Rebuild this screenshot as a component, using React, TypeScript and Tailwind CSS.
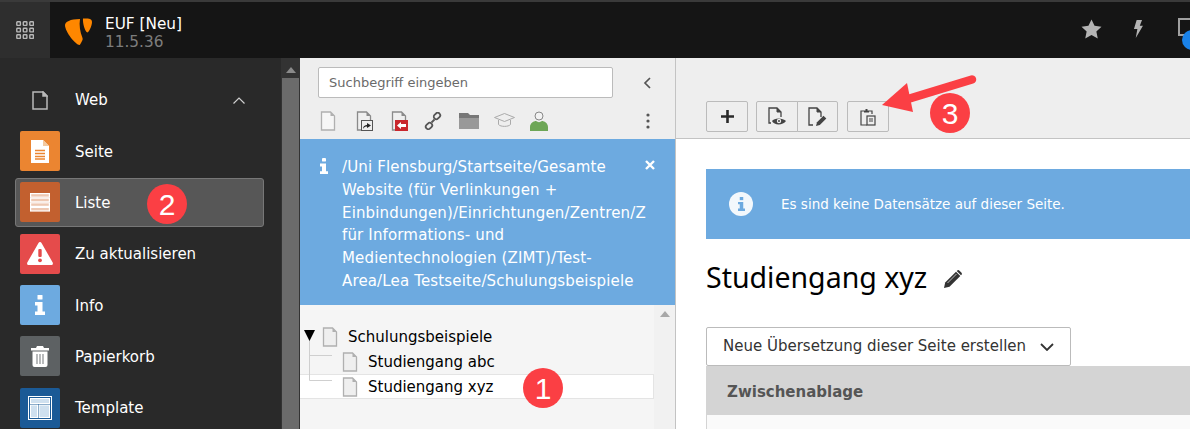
import React from "react";

const Doc = ({ size = 18, stroke = "#b0b0b0", fill = "#efefef", className = "" }: { size?: number; stroke?: string; fill?: string; className?: string }) => (
  <svg width={size} height={size} viewBox="0 0 16 20" className={className}>
    <path d="M1.500 1h9l4 4v14h-13z" fill={fill} stroke={stroke} strokeWidth="1.300" />
    <path d="M10.500 1v4h4z" fill={stroke} />
  </svg>
);

const Badge = ({ n, className }: { n: string; className: string }) => (
  <div className={"absolute w-[40px] h-[40px] rounded-full bg-[#fb3f44] text-white flex items-center justify-center text-[30px] font-['Liberation_Sans',sans-serif] " + className}>
    {n}
  </div>
);

const ModuleRow = ({ color, label, active, children }: { color: string; label: string; active?: boolean; children: React.ReactNode }) => (
  <div className={"flex items-center ml-[15px] rounded-[3px] " + (active ? "bg-[#575757] border border-[#777] my-px h-[49.300px] pl-[4px] mr-[16px]" : "h-[51.300px] pl-[5px] mr-[16px]")}>
    <div className="w-[40px] h-[40px] rounded-[2px] flex items-center justify-center shrink-0" style={{ background: color }}>
      {children}
    </div>
    <span className="ml-[15px] pt-[2px] text-[15px] text-white">{label}</span>
  </div>
);

const ToolBtn = ({ children, className = "" }: { children: React.ReactNode; className?: string }) => (
  <div className={"h-[31px] flex items-center justify-center bg-[#eeeeee] border border-[#bbbbbb] " + className}>{children}</div>
);

export default function App() {
  return (
    <div className="relative w-[1190px] h-[429px] overflow-hidden bg-white flex flex-col font-['DejaVu_Sans',Verdana,sans-serif]">
      {/* top bar */}
      <header className="h-[58px] shrink-0 flex bg-[#151515] border-t-2 border-[#3a3a3a]">
        <div className="w-[50px] bg-[#2e2e2e] flex items-center justify-center">
          <svg width="18" height="18" viewBox="0 0 18 18" fill="none" stroke="#b8b8b8" strokeWidth="1.400">
            {[0, 6.5, 13].map((y) =>
              [0, 6.5, 13].map((x) => <rect key={`${x}-${y}`} x={x + 0.8} y={y + 0.8} width="3.600" height="3.600" rx="0.600" />)
            )}
          </svg>
        </div>
        <svg width="28" height="28" viewBox="0 0 28 28" className="ml-[15px] mt-[16px]">
          <path d="M0 7C0 4 5 1 15 1c-1 6 0 13 2.500 19 .3 1 .2 2-.5 3-1 2-2 4-2.500 4C11 27 0 14 0 7z" fill="#ff8700" />
          <path d="M18 .5C22 .5 27 0 27 4c0 4-3 10-4.500 10.500C20 14 17.500 5 18 .5z" fill="#ff8700" />
        </svg>
        <div className="ml-[12px] mt-[13px] leading-[18px] text-[15.300px]">
          <div className="text-white">EUF [Neu]</div>
          <div className="text-[#7d7d7d]">11.5.36</div>
        </div>
        <div className="ml-auto flex items-center">
          <svg width="21" height="20" viewBox="0 0 24 23" fill="#b4b4b4" className="mr-[31px] mb-[2px]">
            <path d="M12 .5l3.500 7.400 8 1-5.900 5.500 1.600 8L12 18.500l-7.200 3.900 1.600-8L.5 8.900l8-1z" />
          </svg>
          <svg width="10" height="18" viewBox="0 0 11 20" fill="#b4b4b4" className="mr-[35px] mb-[3px]">
            <path d="M4 0h6L7.500 6.500H11L3 20l1.800-10H1z" />
          </svg>
          <div className="relative w-[12px] h-[20px] mb-[4px]">
            <div className="absolute left-0 top-0 w-[20px] h-[18px] border-2 border-[#a0a0a0]" />
            <div className="absolute left-[4px] top-[12px] w-[20px] h-[20px] rounded-full bg-[#1a82e8]" />
          </div>
        </div>
      </header>

      <div className="flex flex-1 min-h-0">
        {/* modules sidebar */}
        <aside className="w-[280px] shrink-0 bg-[#292929]">
          <div className="h-[67.400px] pt-[17px] flex items-center text-white text-[15px]">
            <div className="w-[75px] flex justify-center pl-[5px]">
              <svg width="16" height="19" viewBox="0 0 16 19" fill="none" stroke="#b8b8b8" strokeWidth="1.500">
                <path d="M1 1h10l4 4v13H1z" />
                <path d="M11 1v4h4z" fill="#b8b8b8" />
              </svg>
            </div>
            <span>Web</span>
            <svg width="12" height="7" viewBox="0 0 12 7" fill="none" stroke="#d0d0d0" strokeWidth="1.200" className="ml-[125px]">
              <path d="M.5 6.500L6 1l5.500 5.500" />
            </svg>
          </div>
          <ModuleRow color="#eb8531" label="Seite">
            <svg width="18" height="23" viewBox="0 0 18 23">
              <path d="M0 0h12l6 6v17H0z" fill="#fff" />
              <path d="M12 0v6h6z" fill="#f3c99f" />
              <path d="M4 10.500h10M4 13.500h10M4 16.500h10M4 19h10" stroke="#eb8531" strokeWidth="1.600" />
            </svg>
          </ModuleRow>
          <ModuleRow color="#c2602f" label="Liste" active>
            <svg width="20" height="19" viewBox="0 0 20 19" fill="none" stroke="#fff" strokeWidth="1.200">
              {[0.6, 5.2, 9.8, 14.4].map((y) => (
                <rect key={y} x="0.600" y={y} width="18.800" height="3.600" fill="#eec8b2" />
              ))}
            </svg>
          </ModuleRow>
          <ModuleRow color="#e54b4b" label="Zu aktualisieren">
            <svg width="26" height="23" viewBox="0 0 26 23">
              <path d="M13 0c.7 0 1.200.4 1.500 1L25.700 20.500c.6 1.200-.1 2.500-1.400 2.500H1.700C.4 23-.3 21.700.3 20.500L11.500 1c.3-.6.8-1 1.500-1z" fill="#fff" />
              <rect x="11.300" y="7" width="3.400" height="8" rx="1" fill="#e54b4b" />
              <circle cx="13" cy="18.300" r="1.900" fill="#e54b4b" />
            </svg>
          </ModuleRow>
          <ModuleRow color="#6daae0" label="Info">
            <svg width="10" height="20" viewBox="0 0 10 20" fill="#fff">
              <rect x="2.500" y="0" width="5" height="4.500" rx="0.600" />
              <path d="M0 7h7.500v9.500H10V20H0v-3.500h2.500v-6H0z" />
            </svg>
          </ModuleRow>
          <ModuleRow color="#5d6163" label="Papierkorb">
            <svg width="18" height="21" viewBox="0 0 18 21" fill="#fff">
              <path d="M6 0h6l1 2h5v2.500H0V2h5z" />
              <path d="M1.500 5.500h15V19a2 2 0 0 1-2 2h-11a2 2 0 0 1-2-2z" />
              <path d="M6 8v10M9 8v10M12 8v10" stroke="#8a8e90" strokeWidth="1.200" />
            </svg>
          </ModuleRow>
          <ModuleRow color="#1b5a96" label="Template">
            <svg width="24" height="24" viewBox="0 0 24 24">
              <rect x="0.500" y="0.500" width="23" height="23" fill="none" stroke="#fff" />
              <rect x="2.500" y="2.500" width="19" height="5" fill="#cfe0ef" stroke="#fff" />
              <rect x="2.500" y="9" width="7" height="12.500" fill="#cfe0ef" stroke="#fff" />
              <rect x="11" y="9" width="10.500" height="12.500" fill="#cfe0ef" stroke="#fff" />
            </svg>
          </ModuleRow>
        </aside>

        {/* scrollbar */}
        <div className="w-[20px] shrink-0 bg-[#333333] flex flex-col items-center border-l border-[#2a2a2a]">
          <svg width="10" height="6" viewBox="0 0 10 6" className="mt-[9px] mb-[5px]"><path d="M5 0l5 6H0z" fill="#8a8a8a" /></svg>
          <div className="w-[17px] flex-1 bg-[#6b6b6b]" />
        </div>

        {/* page tree */}
        <section className="w-[376px] shrink-0 flex flex-col bg-[#f5f5f5] border-r border-[#c3c3c3]">
          <div className="h-[81px] shrink-0 bg-[#eeeeee] pl-[18px] pt-[9px] pr-[24px]">
            <div className="flex items-center">
              <div className="w-[295px] shrink-0 h-[31px] bg-white border border-[#bbbbbb] rounded-[2px] pl-[10px] flex items-center text-[13px] text-[#6a6a6a]">
                Suchbegriff eingeben
              </div>
              <svg width="8" height="12" viewBox="0 0 8 12" fill="none" stroke="#555" strokeWidth="1.700" className="ml-[30px] shrink-0">
                <path d="M7 1L2 6l5 5" />
              </svg>
            </div>
            <div className="flex items-center h-[30px] mt-[8px]">
              <Doc size={20} stroke="#b0b0b0" fill="#f6f6f6" className="mr-[16px]" />
              <div className="relative mr-[16px] w-[19px] h-[20px]">
                <Doc size={20} stroke="#8a8a8a" fill="#efefef" />
                <div className="absolute right-0 bottom-0 w-[12px] h-[11px] bg-[#eeeeee] border border-[#555] flex items-center justify-center">
                  <svg width="8" height="7" viewBox="0 0 8 7"><path d="M0 7c0-3 2-4 4-4V1l4 2.500L4 6V4.500C2.500 4.500 1 5 0 7z" fill="#222" /></svg>
                </div>
              </div>
              <div className="relative mr-[16px] w-[19px] h-[20px]">
                <Doc size={20} stroke="#8a8a8a" fill="#efefef" />
                <div className="absolute right-0 bottom-0 w-[13px] h-[11px] bg-[#c9272d] flex items-center justify-center">
                  <svg width="9" height="7" viewBox="0 0 9 7"><path d="M0 3.500L4 0v2h5v3H4v2z" fill="#fff" /></svg>
                </div>
              </div>
              <svg width="18" height="18" viewBox="0 0 18 18" fill="none" stroke="#555" strokeWidth="1.800" className="mr-[17px]">
                <path d="M7.500 10.500l3-3" />
                <rect x="9.500" y="1.500" width="7" height="5" rx="2.500" transform="rotate(-45 13 4)" />
                <rect x="1.500" y="11.500" width="7" height="5" rx="2.500" transform="rotate(-45 5 14)" />
              </svg>
              <svg width="20" height="16" viewBox="0 0 20 16" className="mr-[15px]">
                <path d="M0 0h9l2 2h9v3H0z" fill="#777" />
                <rect y="5" width="20" height="11" fill="#999" />
              </svg>
              <svg width="21" height="16" viewBox="0 0 21 16" fill="none" stroke="#aaa" className="mr-[15px]">
                <path d="M.5 4.500l10-4 10 4-10 4z" />
                <path d="M4.500 7v4.500c2 2.500 10 2.500 12 0V7" />
              </svg>
              <svg width="18" height="20" viewBox="0 0 18 20">
                <circle cx="9" cy="5" r="4" fill="#f2f2f2" stroke="#888" />
                <path d="M0 20v-4c0-4 4-6 6-6 2 1.500 4 1.500 6 0 2 0 6 2 6 6v4z" fill="#6da656" />
              </svg>
              <svg width="4" height="16" viewBox="0 0 4 16" fill="#555" className="ml-auto mr-[1px]">
                <circle cx="2" cy="2" r="1.600" /><circle cx="2" cy="8" r="1.600" /><circle cx="2" cy="14" r="1.600" />
              </svg>
            </div>
          </div>

          <div className="relative h-[166px] shrink-0 bg-[#6daae0] text-white text-[15px] tracking-[0.15px] leading-[22.800px] pl-[42px] pr-[35px] pt-[17px] overflow-hidden">
            <svg width="8" height="16" viewBox="0 0 10 20" fill="#fff" className="absolute left-[20px] top-[19px]">
              <rect x="2.500" y="0" width="5" height="4.500" rx="0.600" />
              <path d="M0 7h7.500v9.500H10V20H0v-3.500h2.500v-6H0z" />
            </svg>
            <svg width="10" height="10" viewBox="0 0 10 10" stroke="#fff" strokeWidth="2.400" className="absolute right-[20px] top-[21px]">
              <path d="M1 1l8 8M9 1l-8 8" />
            </svg>
            <div className="whitespace-nowrap">/Uni Flensburg/Startseite/Gesamte</div>
            <div className="whitespace-nowrap">Website (für Verlinkungen +</div>
            <div className="whitespace-nowrap">Einbindungen)/Einrichtungen/Zentren/Z</div>
            <div className="whitespace-nowrap">für Informations- und</div>
            <div className="whitespace-nowrap">Medientechnologien (ZIMT)/Test-</div>
            <div className="whitespace-nowrap">Area/Lea Testseite/Schulungsbeispiele</div>
          </div>

          <div className="relative flex-1 flex text-[15px] text-black">
            <div className="w-[354px] pt-[19px]">
              <div className="h-[25px] flex items-center pl-[20px]">
                <Doc size={20} />
                <span className="ml-[8px] pt-[1px]">Schulungsbeispiele</span>
              </div>
              <div className="h-[25px] flex items-center pl-[40px]">
                <Doc size={20} />
                <span className="ml-[8px] pt-[1px]">Studiengang abc</span>
              </div>
              <div className="h-[25px] flex items-center pl-[40px] bg-white border-y border-[#e4e4e4] border-r">
                <Doc size={20} />
                <span className="ml-[8px] pt-[1px]">Studiengang xyz</span>
              </div>
            </div>
            <div className="w-[21px] bg-[#f1f1f1] flex justify-center pt-[6px]">
              <svg width="10" height="6" viewBox="0 0 10 6"><path d="M5 0l5 6H0z" fill="#a8a8a8" /></svg>
            </div>
            {/* tree lines */}
            <svg width="32" height="58" viewBox="0 0 32 58" fill="none" stroke="#cfcfcf" className="absolute left-[4px] top-[24px]">
              <path d="M5.500 8v43.500H28M5.500 26.500H28" />
              <path d="M0 1h11L5.500 12z" fill="#000" stroke="none" />
            </svg>
          </div>
        </section>

        {/* content */}
        <main className="flex-1 min-w-0 bg-white flex flex-col">
          <div className="h-[81px] shrink-0 bg-[#eeeeee] border-b border-[#c3c3c3] pl-[30px] pt-[43px] flex items-start">
            <ToolBtn className="w-[42px] rounded-[2px]">
              <svg width="13" height="13" viewBox="0 0 13 13" stroke="#2a2a2a" strokeWidth="2.600"><path d="M6.500 0v13M0 6.500h13" /></svg>
            </ToolBtn>
            <ToolBtn className="w-[42px] ml-[8px] rounded-l-[2px]">
              <svg width="19" height="20" viewBox="0 0 19 20" fill="none">
                <path d="M3 16H1V1h8l4 4v5" stroke="#444" strokeWidth="1.300" />
                <path d="M9 1v4h4z" fill="#444" stroke="#444" />
                <path d="M4 14c2-3.500 11-3.500 14 0-3 4.500-12 4.500-14 0z" fill="#444" />
                <circle cx="11" cy="14" r="2.200" fill="#eee" />
                <circle cx="11" cy="14" r="1" fill="#444" />
              </svg>
            </ToolBtn>
            <ToolBtn className="w-[41px] -ml-px rounded-r-[2px]">
              <svg width="19" height="20" viewBox="0 0 19 20" fill="none">
                <path d="M5 18H1V1h8l4 4v5" stroke="#444" strokeWidth="1.300" />
                <path d="M9 1v4h4z" fill="#444" stroke="#444" />
                <path d="M8 19l1-3.800 6.500-6.500 2.800 2.800-6.500 6.500z" fill="#444" />
              </svg>
            </ToolBtn>
            <ToolBtn className="w-[42px] ml-[9px] rounded-[2px]">
              <svg width="16" height="18" viewBox="0 0 16 18" fill="none" stroke="#444" strokeWidth="1.200">
                <path d="M4 3H1v14h6" />
                <path d="M9 3h3v3" />
                <path d="M4 4.500V2.500h1.500V1h2v1.500H9v2z" fill="#444" stroke="none" />
                <rect x="7" y="8" width="8" height="9" fill="#eee" />
                <path d="M9 11h4M9 13h4" strokeWidth="1" />
              </svg>
            </ToolBtn>
          </div>

          <div className="pl-[30px] pt-[30px]">
            <div className="h-[70px] bg-[#6daae0] flex items-center text-white text-[13.500px]">
              <div className="w-[24px] h-[24px] ml-[23px] rounded-full bg-[#f3f8fc] flex items-center justify-center">
                <svg width="7" height="14" viewBox="0 0 10 20" fill="#6daae0">
                  <rect x="2.500" y="0" width="5" height="4.500" />
                  <path d="M0 7h7.500v9.500H10V20H0v-3.500h2.500v-6H0z" />
                </svg>
              </div>
              <span className="ml-[28px] whitespace-nowrap">Es sind keine Datensätze auf dieser Seite.</span>
            </div>
            <h1 className="mt-[17px] h-[42px] flex items-center text-[28.500px] text-black font-['Noto_Sans',sans-serif]">
              Studiengang xyz
              <svg width="18" height="18" viewBox="0 0 18 18" fill="#333" className="ml-[17px] mt-[3px]">
                <path d="M0 18l1.200-5.500L12 1.700 16.300 6 5.500 16.800z" />
                <path d="M13 .7c.8-.8 1.700-.8 2.500 0l1.800 1.800c.8.8.8 1.700 0 2.500L17 5.300 12.700 1z" />
                <path d="M3.500 13l9-9" stroke="#ddd" strokeWidth="0.800" />
              </svg>
            </h1>
            <div className="mt-[29px] w-[365px] h-[39px] bg-white border border-[#bbbbbb] rounded-[2px] flex items-center pl-[16px] text-[15px] text-[#333]">
              <span className="whitespace-nowrap">Neue Übersetzung dieser Seite erstellen</span>
              <svg width="14" height="8" viewBox="0 0 14 8" fill="none" stroke="#333" strokeWidth="1.800" className="ml-[14px]">
                <path d="M1 1l6 6 6-6" />
              </svg>
            </div>
            <div className="border-l border-[#d4d4d4] bg-[#fafafa]">
              <div className="h-[49px] pt-[3px] bg-[#d4d4d4] flex items-center pl-[20px] text-[15px] font-bold text-[#555]">Zwischenablage</div>
              <div className="h-[14px]" />
            </div>
          </div>
        </main>
      </div>

      {/* annotations */}
      <Badge n="2" className="left-[147px] top-[184px]" />
      <Badge n="1" className="left-[523px] top-[368px]" />
      <Badge n="3" className="left-[930px] top-[93px]" />
      <svg width="100" height="50" viewBox="0 0 100 50" className="absolute left-[880px] top-[70px]">
        <path d="M92 9.500L28 29" stroke="#fb3f44" strokeWidth="8.500" strokeLinecap="round" />
        <path d="M2 35L27 13 33 42z" fill="#fb3f44" />
      </svg>
    </div>
  );
}
